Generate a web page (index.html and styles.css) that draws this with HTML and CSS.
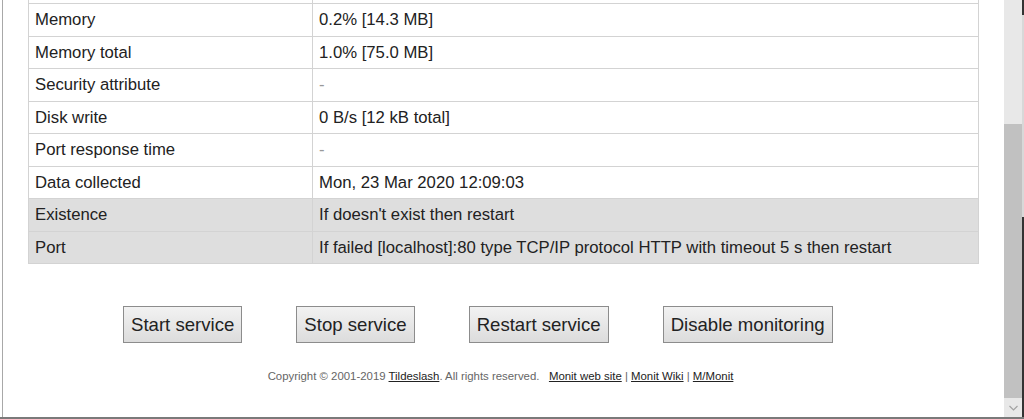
FILE: index.html
```html
<!DOCTYPE html>
<html lang="en">
<head>
  <meta charset="UTF-8">
  <meta name="viewport" content="width=device-width, initial-scale=1">
  <title>Monit: nginx</title>
  <link rel="stylesheet" href="styles.css">
</head>
<body>
  <div class="screen">
    <div class="page">
      <table class="status">
        <!-- row scrolled out of view above -->
        <tr><td></td><td></td></tr>
        <tr><td>Memory</td><td>0.2% [14.3 MB]</td></tr>
        <tr><td>Memory total</td><td>1.0% [75.0 MB]</td></tr>
        <tr><td>Security attribute</td><td class="none">-</td></tr>
        <tr><td>Disk write</td><td>0 B/s [12 kB total]</td></tr>
        <tr><td>Port response time</td><td class="none">-</td></tr>
        <tr><td>Data collected</td><td>Mon, 23 Mar 2020 12:09:03</td></tr>
        <tr class="rule"><td>Existence</td><td>If doesn't exist then restart</td></tr>
        <tr class="rule"><td>Port</td><td>If failed [localhost]:80 type TCP/IP protocol HTTP with timeout 5 s then restart</td></tr>
      </table>

      <div class="buttons">
        <button type="button">Start service</button>
        <button type="button">Stop service</button>
        <button type="button">Restart service</button>
        <button type="button">Disable monitoring</button>
      </div>

      <p class="footer">
        Copyright &copy; 2001-2019 <a href="#">Tildeslash</a>. All rights reserved.&nbsp;&nbsp;
        <a href="#">Monit web site</a> | <a href="#">Monit Wiki</a> | <a href="#">M/Monit</a>
      </p>
    </div>

    <!-- fake window scrollbar -->
    <div class="scrollbar">
      <div class="track"></div>
      <div class="thumb"></div>
      <div class="arrow">
        <svg width="17" height="17" viewBox="0 0 17 17"><path d="M4.5 7 L8.5 11 L12.5 7" fill="none" stroke="#a3a3a3" stroke-width="1.2"/></svg>
      </div>
    </div>
    <div class="edge"></div>
  </div>
</body>
</html>
```

FILE: styles.css
```css
html, body {
  margin: 0;
  padding: 0;
  background: #fff;
}
body {
  overflow: hidden;
  font-family: "Liberation Sans", Arial, sans-serif;
  color: #222;
}
.screen {
  display: flex;
  height: 419px;
  box-sizing: border-box;
  border-bottom: 2px solid #7a7a7a;
  overflow: hidden;
}
.page {
  flex: 1;
  margin-left: 2px;
  border-left: 1px solid #a8a8a8;
  display: flex;
  flex-direction: column;
  align-items: center;
  overflow: hidden;
}
.status {
  width: 95%;
  margin-top: -29.5px;
  border-collapse: collapse;
  font-size: 16.7px;
  flex-shrink: 0;
}
.status td {
  border: 1px solid #d3d3d3;
  padding: 0 6px;
  height: 32.5px;
  line-height: 19px;
  box-sizing: border-box;
  vertical-align: middle;
}
.status td:first-child {
  width: 284px;
}
.status td.none {
  color: #999;
}
.status tr.rule td {
  background: #dedede;
}
.buttons {
  align-self: flex-start;
  display: flex;
  gap: 54px;
  margin: 42px 0 0 120px;
}
.buttons button {
  font-family: "Liberation Sans", Arial, sans-serif;
  font-size: 18.6px;
  color: #222;
  height: 37px;
  padding: 0 7px;
  border: 1px solid #8c8c8c;
  border-radius: 0;
  background: linear-gradient(to bottom, #f2f2f2, #dcdcdc);
}
.footer {
  margin: 27px 0 0;
  font-size: 11.4px;
  line-height: 13px;
  color: #666;
  margin-left: -6px;
}
.footer a {
  color: #222;
}
.scrollbar {
  width: 18px;
  display: flex;
  flex-direction: column;
  background: #e8e8e8;
}
.track {
  height: 124px;
}
.thumb {
  flex: 1;
  background: #c1c1c1;
}
.arrow {
  height: 19px;
  display: flex;
  align-items: center;
  justify-content: center;
}
.edge {
  width: 2px;
  background: linear-gradient(to bottom, #333 0, #333 15px, #d8d8d8 15px, #d8d8d8 217px, #333 217px);
}
```
